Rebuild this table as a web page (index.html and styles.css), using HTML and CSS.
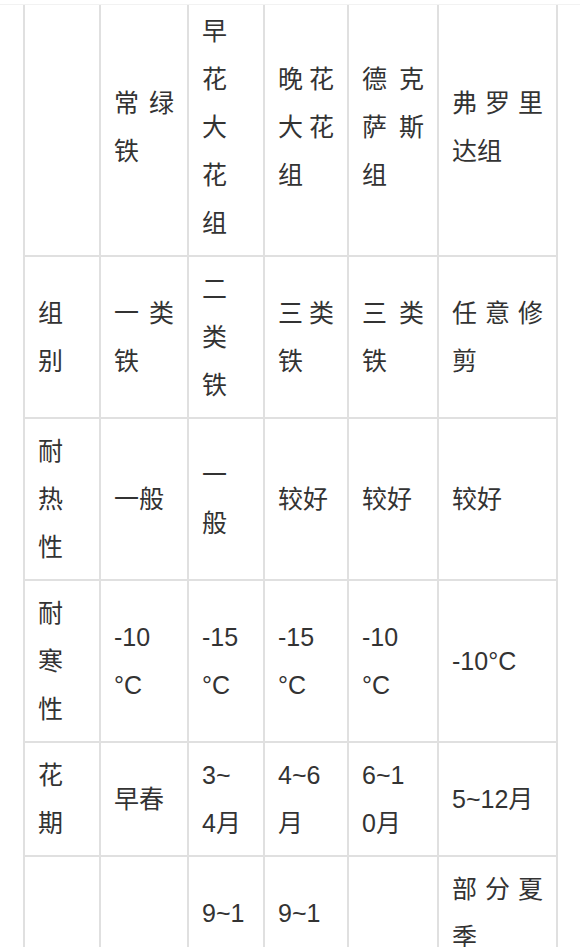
FILE: index.html
```html
<!DOCTYPE html>
<html lang="zh-CN">
<head>
<meta charset="utf-8">
<title>铁线莲分组</title>
<link rel="stylesheet" href="styles.css">
</head>
<body>
<div class="topbar"></div>
<div class="page">
  <table class="grid">
    <colgroup>
      <col class="c1"><col class="c2"><col class="c3"><col class="c4"><col class="c5"><col class="c6">
    </colgroup>
    <thead>
      <tr>
        <th></th>
        <th>常绿铁</th>
        <th>早花大花组</th>
        <th>晚花大花组</th>
        <th>德克萨斯组</th>
        <th>弗罗里达组</th>
      </tr>
    </thead>
    <tbody>
      <tr>
        <td>组别</td>
        <td>一类铁</td>
        <td>二类铁</td>
        <td>三类铁</td>
        <td>三类铁</td>
        <td>任意修剪</td>
      </tr>
      <tr>
        <td>耐热性</td>
        <td>一般</td>
        <td>一般</td>
        <td>较好</td>
        <td>较好</td>
        <td>较好</td>
      </tr>
      <tr>
        <td>耐寒性</td>
        <td>-10<br>°C</td>
        <td>-15<br>°C</td>
        <td>-15<br>°C</td>
        <td>-10<br>°C</td>
        <td>-10°C</td>
      </tr>
      <tr>
        <td>花期</td>
        <td>早春</td>
        <td>3~<br>4月</td>
        <td>4~6<br>月</td>
        <td>6~1<br>0月</td>
        <td>5~12月</td>
      </tr>
      <tr>
        <td></td>
        <td></td>
        <td>9~1<br>0月</td>
        <td>9~1<br>0月</td>
        <td></td>
        <td>部分夏季<br>休眠</td>
      </tr>
    </tbody>
  </table>
</div>
</body>
</html>
```

FILE: styles.css
```css
html, body {
  margin: 0;
  padding: 0;
  background: #ffffff;
}

body {
  font-family: "Liberation Sans", "Noto Sans CJK SC", sans-serif;
  color: #333333;
}

.topbar {
  position: fixed;
  top: 0;
  left: 0;
  right: 0;
  height: 4px;
  background: #ffffff;
  border-bottom: 1px solid #f2f2f2;
  z-index: 2;
}

.page {
  padding-left: 23px;
}

.grid {
  margin-top: -3px;
  width: 533px;
  table-layout: fixed;
  border-collapse: collapse;
  font-size: 25px;
  line-height: 48px;
}

.c1 { width: 76px; }
.c2 { width: 88px; }
.c3 { width: 76px; }
.c4 { width: 84px; }
.c5 { width: 90px; }
.c6 { width: 119px; }

.grid th,
.grid td {
  border: 2px solid #e0e0e0;
  padding: 8px 13px;
  font-weight: normal;
  text-align: justify;
  vertical-align: middle;
}
```
